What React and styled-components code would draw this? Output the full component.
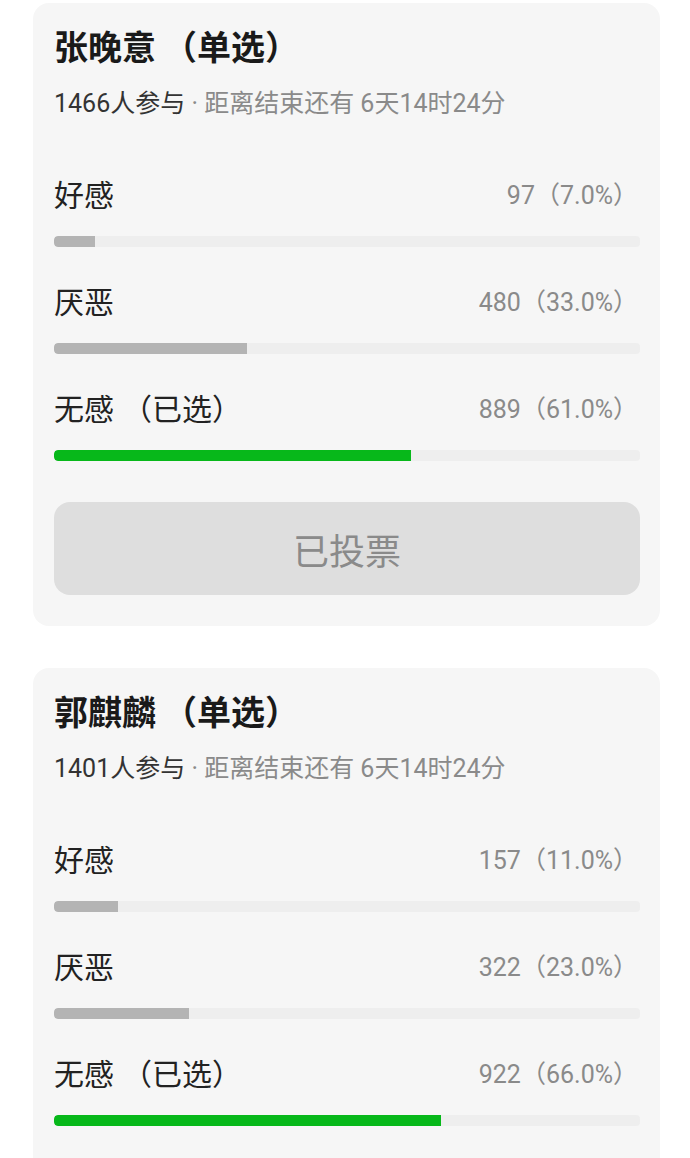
import styled, { createGlobalStyle } from "styled-components";

const polls = [
	{
		name: "张晚意",
		mode: "单选",
		count: 1466,
		left: "6天14时24分",
		options: [
			{ label: "好感", votes: 97, pct: 7 },
			{ label: "厌恶", votes: 480, pct: 33 },
			{ label: "无感", votes: 889, pct: 61, chosen: true },
		],
	},
	{
		name: "郭麒麟",
		mode: "单选",
		count: 1401,
		left: "6天14时24分",
		options: [
			{ label: "好感", votes: 157, pct: 11 },
			{ label: "厌恶", votes: 322, pct: 23 },
			{ label: "无感", votes: 922, pct: 66, chosen: true },
		],
	},
];

const GlobalStyle = createGlobalStyle`
	body {
		margin: 0;
		background: #ffffff;
		font-family: Roboto, "Noto Sans CJK SC", sans-serif;
	}
`;

function Poll({ poll }) {
	return (
		<Card>
			<Title>
				{poll.name}
				<Paren $gap={7}>（{poll.mode}）</Paren>
			</Title>
			<Meta>
				<strong>{poll.count}人参与</strong> · 距离结束还有 {poll.left}
			</Meta>
			<Options>
				{poll.options.map((o) => (
					<Option key={o.label}>
						<OptionHead>
							<Label>
								{o.label}
								{o.chosen && <Paren $gap={8}>（已选）</Paren>}
							</Label>
							<Value>
								{o.votes}（{o.pct.toFixed(1)}%）
							</Value>
						</OptionHead>
						<Track>
							<Fill $chosen={o.chosen} style={{ width: `${o.pct}%` }} />
						</Track>
					</Option>
				))}
			</Options>
			<VotedButton>已投票</VotedButton>
		</Card>
	);
}

export default function App() {
	return (
		<>
			<GlobalStyle />
			<Page>
				{polls.map((p) => (
					<Poll key={p.name} poll={p} />
				))}
			</Page>
		</>
	);
}

const Page = styled.div`
	display: flex;
	flex-direction: column;
	gap: 42px;
	padding: 3px 30px 40px 33px;
`;

const Card = styled.div`
	background: #f6f6f6;
	border-radius: 16px;
	padding: 24px 20px 31px 21px;
`;

const Title = styled.div`
	font-size: 34px;
	line-height: 42px;
	font-weight: 700;
	color: #1a1a1a;
`;

const Paren = styled.span`
	margin-left: ${(p) => p.$gap}px;
`;

const Meta = styled.div`
	margin-top: 20px;
	font-size: 25px;
	line-height: 30px;
	color: #8a8a8a;

	strong {
		font-weight: 400;
		color: #333333;
	}
`;

const Options = styled.div`
	margin-top: 54px;
	display: flex;
	flex-direction: column;
	gap: 33px;
`;

const Option = styled.div`
	display: flex;
	flex-direction: column;
	gap: 23px;
`;

const OptionHead = styled.div`
	display: flex;
	justify-content: space-between;
	align-items: center;
	height: 40px;
`;

const Label = styled.span`
	font-size: 30px;
	color: #222222;
`;

const Value = styled.span`
	font-size: 25px;
	color: #8a8a8a;
	padding-right: 2px;
`;

const Track = styled.div`
	height: 11px;
	border-radius: 4px;
	background: #eeeeee;
	overflow: hidden;
`;

const Fill = styled.div`
	height: 100%;
	border-radius: 4px 0 0 4px;
	background: ${(p) => (p.$chosen ? "#07b81a" : "#b4b4b4")};
`;

const VotedButton = styled.div`
	margin-top: 41px;
	height: 93px;
	border-radius: 16px;
	background: #dedede;
	color: #8a8a8a;
	font-size: 36px;
	display: flex;
	align-items: center;
	justify-content: center;
`;
